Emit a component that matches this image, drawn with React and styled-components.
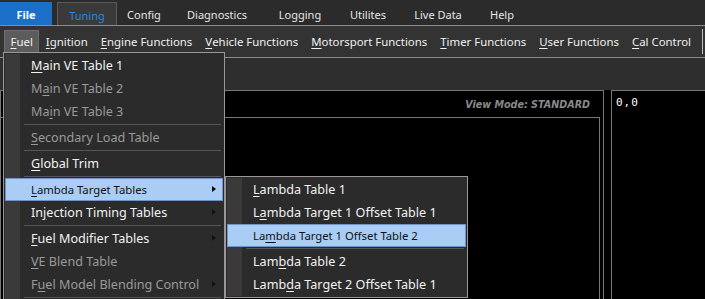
import React from "react";
import styled, { createGlobalStyle } from "styled-components";

const GlobalStyle = createGlobalStyle`
    html, body {
        margin: 0;
        padding: 0;
        background: #000;
        overflow: hidden;
    }
    body {
        font-family: "Noto Sans", "Open Sans", sans-serif;
    }
`;

const tabs = [
    { label: "File", width: 52 },
    { label: "Tuning", width: 60, active: true },
    { label: "Config", width: 54 },
    { label: "Diagnostics", width: 92 },
    { label: "Logging", width: 74 },
    { label: "Utilites", width: 62 },
    { label: "Live Data", width: 78 },
    { label: "Help", width: 50 },
];

const menuBar = [
    ["F", "uel"],
    ["I", "gnition"],
    ["E", "ngine Functions"],
    ["V", "ehicle Functions"],
    ["M", "otorsport Functions"],
    ["T", "imer Functions"],
    ["U", "ser Functions"],
    ["C", "al Control"],
];

// [before, underlined, after, disabled, submenu, highlighted]
const fuelItems = [
    ["", "M", "ain VE Table 1", false, false],
    ["M", "a", "in VE Table 2", true, false],
    ["Ma", "i", "n VE Table 3", true, false],
    "sep",
    ["", "S", "econdary Load Table", true, false],
    "sep",
    ["", "G", "lobal Trim", false, false],
    "sep",
    ["", "L", "ambda Target Tables", false, true, true],
    ["In", "j", "ection Timing Tables", false, true],
    "sep",
    ["", "F", "uel Modifier Tables", false, true],
    ["", "V", "E Blend Table", true, false],
    ["F", "u", "el Model Blending Control", true, true],
    "sep",
];

const lambdaItems = [
    ["", "L", "ambda Table 1", false, false],
    ["L", "a", "mbda Target 1 Offset Table 1", false, false],
    ["La", "m", "bda Target 1 Offset Table 2", false, false, true],
    "sep",
    ["Lam", "b", "da Table 2", false, false],
    ["Lamb", "d", "a Target 2 Offset Table 1", false, false],
];

function MenuList({ items }) {
    return items.map((it, i) => {
        if (it === "sep") {
            return <Separator key={i} />;
        }
        const [pre, key, post, disabled, sub, hot] = it;
        return (
            <Item key={i} $hot={hot} $disabled={disabled}>
                <IconCol $hot={hot} />
                <ItemText $hot={hot}>
                    {pre}
                    <u>{key}</u>
                    {post}
                </ItemText>
                {sub ? <Arrow $hot={hot} /> : null}
            </Item>
        );
    });
}

export default function App() {
    return (
        <Screen>
            <GlobalStyle />
            <TabStrip>
                {tabs.map((t) => (
                    <Tab key={t.label} $width={t.width} $file={t.label === "File"} $active={t.active}>
                        {t.label}
                    </Tab>
                ))}
            </TabStrip>
            <MenuBar>
                {menuBar.map(([k, rest], i) => (
                    <BarItem key={k + rest} $open={i === 0}>
                        <u>{k}</u>
                        {rest}
                    </BarItem>
                ))}
                <BarEdge />
            </MenuBar>
            <Toolbar />
            <Workspace>
                <MapPanel>
                    <MapHeader>
                        <ViewMode>View Mode: STANDARD</ViewMode>
                    </MapHeader>
                    <MapGrid />
                </MapPanel>
                <Splitter />
                <ValuePanel>0,0</ValuePanel>
            </Workspace>

            <FuelMenu>
                <MenuList items={fuelItems} />
            </FuelMenu>
            <LambdaMenu>
                <MenuList items={lambdaItems} />
            </LambdaMenu>
        </Screen>
    );
}

const Screen = styled.div`
    position: relative;
    width: 705px;
    height: 299px;
    display: flex;
    flex-direction: column;
    background: #000;
    overflow: hidden;
    u {
        text-decoration-thickness: 1px;
        text-underline-offset: 2px;
    }
`;

const TabStrip = styled.div`
    display: flex;
    align-items: flex-end;
    height: 26px;
    background: #2b2b2b;
    border-bottom: 1px solid #8c8c8c;
    box-sizing: border-box;
    padding-top: 2px;
`;

const Tab = styled.div`
    width: ${(p) => p.$width}px;
    flex-shrink: 0;
    height: 23px;
    box-sizing: border-box;
    display: flex;
    align-items: center;
    justify-content: center;
    padding-top: 2px;
    font-size: 11px;
    color: ${(p) => (p.$file ? "#fff" : p.$active ? "#2b86dc" : "#e6e6e6")};
    font-weight: ${(p) => (p.$file ? 700 : 400)};
    background: ${(p) => (p.$file ? "#1b6fc6" : p.$active ? "#3a3a3a" : "transparent")};
    border: ${(p) => (p.$active ? "1px solid #5a5a5a" : "none")};
    border-bottom: none;
    margin-right: ${(p) => (p.$file ? 5 : 0)}px;
`;

const MenuBar = styled.div`
    display: flex;
    align-items: center;
    height: 32px;
    box-sizing: border-box;
    padding: 0 0 0 4px;
    background: #333333;
    border-bottom: 1px solid #8c8c8c;
`;

const BarItem = styled.div`
    flex-shrink: 0;
    white-space: nowrap;
    height: 24px;
    box-sizing: border-box;
    display: flex;
    align-items: center;
    padding: 0 5.5px;
    font-size: 11.4px;
    color: #f0f0f0;
    background: ${(p) => (p.$open ? "#5c5c5c" : "transparent")};
    border: 1px solid ${(p) => (p.$open ? "#6e6e6e" : "transparent")};
`;

const BarEdge = styled.div`
    margin-left: auto;
    margin-right: 2px;
    flex-shrink: 0;
    width: 1px;
    height: 25px;
    background: #bdbdbd;
`;

const Toolbar = styled.div`
    height: 32px;
    background: #2e2e2e;
`;

const Workspace = styled.div`
    flex: 1;
    display: flex;
    background: #000;
`;

const MapPanel = styled.div`
    width: 604px;
    box-sizing: border-box;
    border: 1px solid #777;
    border-bottom: none;
    display: flex;
    flex-direction: column;
`;

const MapHeader = styled.div`
    height: 26px;
    display: flex;
    align-items: center;
    justify-content: flex-end;
    padding-right: 13px;
`;

const ViewMode = styled.span`
    font-family: "DejaVu Sans", sans-serif;
    font-style: italic;
    font-weight: 700;
    font-size: 9.6px;
    color: #8a8a8a;
`;

const MapGrid = styled.div`
    flex: 1;
    margin-right: 3px;
    border-top: 1px solid #777;
    border-right: 1px solid #777;
`;

const Splitter = styled.div`
    width: 7px;
`;

const ValuePanel = styled.div`
    flex: 1;
    border-left: 1px solid #777;
    border-top: 1px solid #777;
    padding: 5px 0 0 4px;
    font-family: "DejaVu Sans Mono", monospace;
    font-size: 11px;
    letter-spacing: 1px;
    color: #fff;
`;

const DropMenu = styled.div`
    position: absolute;
    box-sizing: border-box;
    background: #2b2b2b;
    border: 1px solid #9d9696;
    border-bottom: none;
    padding: 1px 1px 0 1px;
    display: flex;
    flex-direction: column;
`;

const FuelMenu = styled(DropMenu)`
    left: 3px;
    top: 52px;
    width: 222px;
    height: 250px;
`;

const LambdaMenu = styled(DropMenu)`
    left: 225px;
    top: 176px;
    width: 243px;
    height: 122px;
    border-bottom: 1px solid #9d9696;
`;

const Item = styled.div`
    position: relative;
    height: 23px;
    box-sizing: border-box;
    display: flex;
    align-items: center;
    font-size: 12.6px;
    color: ${(p) => (p.$hot ? "#111" : p.$disabled ? "#9a9a9a" : "#f2f2f2")};
    background: ${(p) => (p.$hot ? "#a9cdf4" : "transparent")};
    border: 1px solid ${(p) => (p.$hot ? "#6e93c4" : "transparent")};
`;

const IconCol = styled.div`
    align-self: stretch;
    width: 15px;
    margin: -1px 0 -1px -1px;
    background: ${(p) => (p.$hot ? "transparent" : "#3a3a3a")};
`;

const ItemText = styled.span`
    padding-left: 11px;
    white-space: nowrap;
    font-size: ${(p) => (p.$hot ? "11.3px" : "inherit")};
`;

const Arrow = styled.span`
    position: absolute;
    right: 6px;
    top: 7px;
    width: 0;
    height: 0;
    border-top: 3.5px solid transparent;
    border-bottom: 3.5px solid transparent;
    border-left: 4px solid ${(p) => (p.$hot ? "#000" : "#111")};
`;

const Separator = styled.div`
    height: 3px;
    display: flex;
    align-items: center;
    &::before {
        content: "";
        width: 15px;
        align-self: stretch;
        background: #3a3a3a;
    }
    &::after {
        content: "";
        flex: 1;
        height: 1px;
        margin: 0 2px 0 4px;
        background: #555;
    }
`;
